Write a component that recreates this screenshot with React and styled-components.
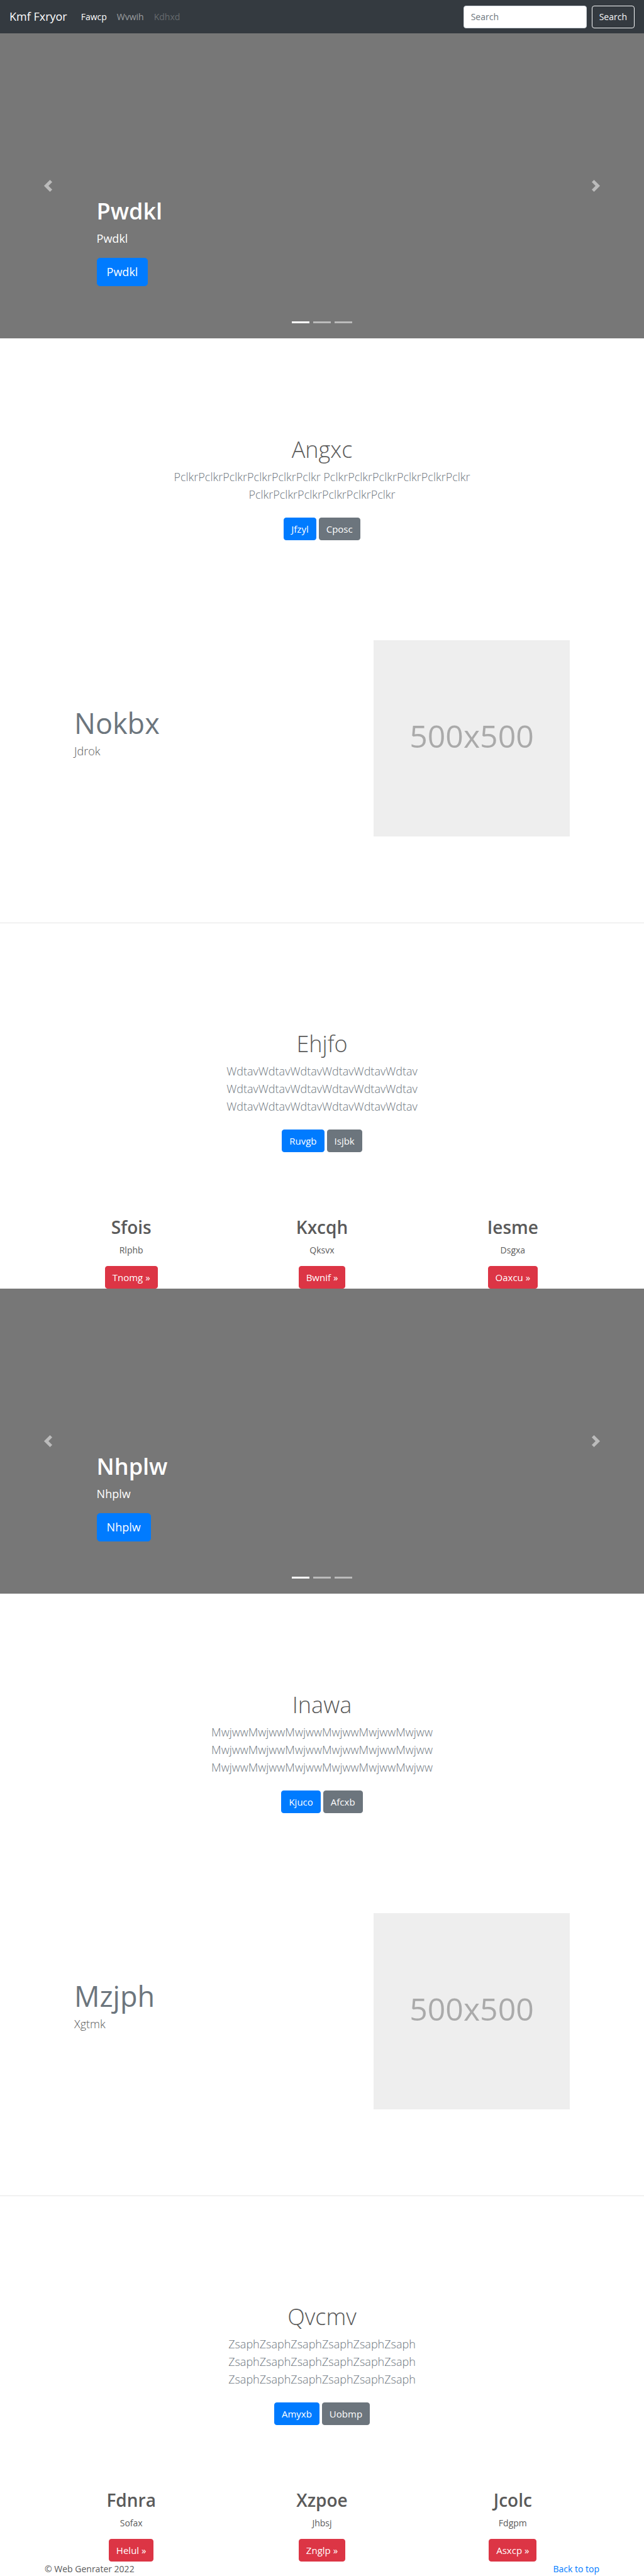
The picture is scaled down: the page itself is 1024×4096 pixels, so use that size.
import React from "react";
import styled, { createGlobalStyle } from "styled-components";

const GlobalStyle = createGlobalStyle`
  *, *::before, *::after { box-sizing: border-box; }
  body {
    margin: 0;
    background: #fff;
    color: #5a5a5a;
    font-family: "Open Sans", "Noto Sans", sans-serif;
    font-size: 14px;
    line-height: 23px;
  }
  h1, h2, p { margin: 0; }
  a { color: #007bff; text-decoration: none; }
  button, input { font: inherit; margin: 0; }
`;

const Navbar = styled.nav`
  display: flex;
  align-items: center;
  height: 53px;
  padding: 0 15px;
  background: #343a40;
`;

const Brand = styled.a`
  margin-right: 14px;
  color: #fff;
  font-size: 18px;
`;

const NavList = styled.ul`
  display: flex;
  flex: 1;
  margin: 0;
  padding: 0;
  list-style: none;
`;

const NavLink = styled.a`
  display: block;
  padding: 0 8px;
  color: ${(p) =>
    p.$state === "active" ? "#fff" : p.$state === "disabled" ? "rgba(255,255,255,.25)" : "rgba(255,255,255,.5)"};
`;

const SearchForm = styled.form`
  display: flex;
  gap: 8px;
`;

const SearchInput = styled.input`
  width: 196px;
  height: 36px;
  padding: 0 11px;
  border: 1px solid #ced4da;
  border-radius: 4px;
  background: #fff;
  color: #495057;
  &::placeholder { color: #6c757d; opacity: 1; }
`;

const tones = { primary: "#007bff", secondary: "#6c757d", danger: "#dc3545" };

const SearchButton = styled.button`
  height: 36px;
  padding: 0 11px;
  border: 1px solid #f8f9fa;
  border-radius: 4px;
  background: transparent;
  color: #f8f9fa;
`;

const Button = styled.a`
  display: inline-block;
  padding: ${(p) => (p.$large ? "8px 15px" : "6px 11px")};
  border: 1px solid ${(p) => tones[p.$tone]};
  border-radius: ${(p) => (p.$large ? 5 : 4)}px;
  background: ${(p) => tones[p.$tone]};
  color: #fff;
  font-size: ${(p) => (p.$large ? 18 : 15)}px;
  line-height: ${(p) => (p.$large ? 27 : 22)}px;
`;

const CarouselBox = styled.section`
  position: relative;
  display: flex;
  flex-direction: column;
  justify-content: flex-end;
  align-items: flex-start;
  height: 485px;
  padding: 0 15% 83px;
  background: #777;
  color: #fff;
`;

const CarouselTitle = styled.h1`
  margin-bottom: 5px;
  font-size: 36px;
  font-weight: 600;
  line-height: 49px;
`;

const CarouselText = styled.p`
  margin-bottom: 17px;
  font-size: 18px;
  line-height: 28px;
`;

const Control = styled.button`
  position: absolute;
  top: 0;
  bottom: 0;
  ${(p) => p.$side}: 0;
  display: flex;
  align-items: center;
  justify-content: center;
  width: 15%;
  padding: 0;
  border: 0;
  background: none;
  opacity: 0.5;
  svg { width: 19px; height: 19px; fill: #fff; }
`;

const Indicators = styled.div`
  position: absolute;
  right: 0;
  bottom: 24px;
  left: 0;
  display: flex;
  justify-content: center;
  gap: 6px;
`;

const Indicator = styled.button`
  width: 28px;
  height: 3px;
  padding: 0;
  border: 0;
  background: #fff;
  opacity: ${(p) => (p.$active ? 1 : 0.5)};
`;

const Intro = styled.section`
  max-width: 576px;
  margin: 0 auto;
  padding: ${(p) => p.$top}px 14px 0;
  text-align: center;
`;

const IntroTitle = styled.h1`
  margin-bottom: 5px;
  font-size: 36px;
  font-weight: 300;
  line-height: 49px;
`;

const Lead = styled.p`
  color: ${(p) => (p.$muted ? "#6c757d" : "inherit")};
  font-size: 18px;
  font-weight: 300;
  line-height: 28px;
`;

const Actions = styled.div`
  display: flex;
  justify-content: center;
  gap: 4px;
  margin-top: 23px;
`;

const Container = styled.div`
  max-width: 910px;
  margin: 0 auto;
  padding: 0 14px;
`;

const Feature = styled.section`
  display: grid;
  grid-template-columns: 7fr 5fr;
  padding: 159px 33px 0;
`;

const FeatureText = styled.div`
  padding: 106px 14px 0;
`;

const FeatureTitle = styled.h2`
  margin-bottom: 5px;
  color: #6c757d;
  font-size: 45px;
  font-weight: 400;
  line-height: 51px;
`;

const FeatureMedia = styled.div`
  padding: 0 14px;
`;

const Placeholder = styled.div`
  display: flex;
  align-items: center;
  justify-content: center;
  aspect-ratio: 1;
  padding-bottom: 8px;
  background: #eee;
  color: #aaa;
  font-size: 50px;
  line-height: 68px;
`;

const Divider = styled.hr`
  height: 1px;
  margin: 137px 0 0;
  border: 0;
  background: #e5e5e5;
`;

const Columns = styled.section`
  display: grid;
  grid-template-columns: repeat(3, 1fr);
  margin: 0 -14px;
  padding-top: 99px;
  text-align: center;
`;

const ColumnTitle = styled.h2`
  margin-bottom: 5px;
  font-size: 28px;
  font-weight: 600;
  line-height: 40px;
`;

const ColumnAction = styled.p`
  display: flex;
  justify-content: center;
  margin-top: 14px;
`;

const Footer = styled.footer`
  display: flex;
  justify-content: space-between;
`;

function Carousel({ text }) {
  return (
    <CarouselBox>
      <CarouselTitle>{text}</CarouselTitle>
      <CarouselText>{text}</CarouselText>
      <Button href="#" $tone="primary" $large>{text}</Button>
      <Indicators>
        {[0, 1, 2].map((i) => (
          <Indicator key={i} type="button" aria-label={`Slide ${i + 1}`} $active={i === 0} />
        ))}
      </Indicators>
      <Control type="button" aria-label="Previous" $side="left">
        <svg viewBox="0 0 8 8"><path d="M5.25 0l-4 4 4 4 1.5-1.5-2.5-2.5 2.5-2.5-1.5-1.5z" /></svg>
      </Control>
      <Control type="button" aria-label="Next" $side="right">
        <svg viewBox="0 0 8 8"><path d="M2.75 0l-1.5 1.5 2.5 2.5-2.5 2.5 1.5 1.5 4-4-4-4z" /></svg>
      </Control>
    </CarouselBox>
  );
}

function IntroBlock({ title, words, actions, top }) {
  return (
    <Intro $top={top}>
      <IntroTitle>{title}</IntroTitle>
      <Lead $muted>{words}</Lead>
      <Actions>
        <Button href="#" $tone="primary">{actions[0]}</Button>
        <Button href="#" $tone="secondary">{actions[1]}</Button>
      </Actions>
    </Intro>
  );
}

function FeatureBlock({ title, text }) {
  return (
    <>
      <Container>
        <Feature>
          <FeatureText>
            <FeatureTitle>{title}</FeatureTitle>
            <Lead>{text}</Lead>
          </FeatureText>
          <FeatureMedia>
            <Placeholder>500x500</Placeholder>
          </FeatureMedia>
        </Feature>
      </Container>
      <Divider />
    </>
  );
}

function ColumnBlock({ items }) {
  return (
    <Container>
      <Columns>
        {items.map(([title, text, action]) => (
          <div key={title}>
            <ColumnTitle>{title}</ColumnTitle>
            <p>{text}</p>
            <ColumnAction>
              <Button href="#" $tone="danger">{action} »</Button>
            </ColumnAction>
          </div>
        ))}
      </Columns>
    </Container>
  );
}

const thrice = (word) => Array(3).fill(word.repeat(6)).join(" ");

export default function App() {
  return (
    <>
      <GlobalStyle />
      <header id="top">
        <Navbar>
          <Brand href="#">Kmf Fxryor</Brand>
          <NavList>
            <li><NavLink href="#" $state="active">Fawcp</NavLink></li>
            <li><NavLink href="#">Wvwih</NavLink></li>
            <li><NavLink href="#" aria-disabled="true" $state="disabled">Kdhxd</NavLink></li>
          </NavList>
          <SearchForm onSubmit={(e) => e.preventDefault()}>
            <SearchInput type="text" placeholder="Search" aria-label="Search" />
            <SearchButton type="submit">Search</SearchButton>
          </SearchForm>
        </Navbar>
      </header>
      <main>
        <Carousel text="Pwdkl" />
        <IntroBlock title="Angxc" words={thrice("Pclkr")} actions={["Jfzyl", "Cposc"]} top={152} />
        <FeatureBlock title="Nokbx" text="Jdrok" />
        <IntroBlock title="Ehjfo" words={thrice("Wdtav")} actions={["Ruvgb", "Isjbk"]} top={167} />
        <ColumnBlock
          items={[
            ["Sfois", "Rlphb", "Tnomg"],
            ["Kxcqh", "Qksvx", "Bwnif"],
            ["Iesme", "Dsgxa", "Oaxcu"],
          ]}
        />
        <Carousel text="Nhplw" />
        <IntroBlock title="Inawa" words={thrice("Mwjww")} actions={["Kjuco", "Afcxb"]} top={152} />
        <FeatureBlock title="Mzjph" text="Xgtmk" />
        <IntroBlock title="Qvcmv" words={thrice("Zsaph")} actions={["Amyxb", "Uobmp"]} top={167} />
        <ColumnBlock
          items={[
            ["Fdnra", "Sofax", "Helul"],
            ["Xzpoe", "Jhbsj", "Znglp"],
            ["Jcolc", "Fdgpm", "Asxcp"],
          ]}
        />
      </main>
      <Container>
        <Footer>
          <p>© Web Genrater 2022</p>
          <a href="#top">Back to top</a>
        </Footer>
      </Container>
    </>
  );
}
